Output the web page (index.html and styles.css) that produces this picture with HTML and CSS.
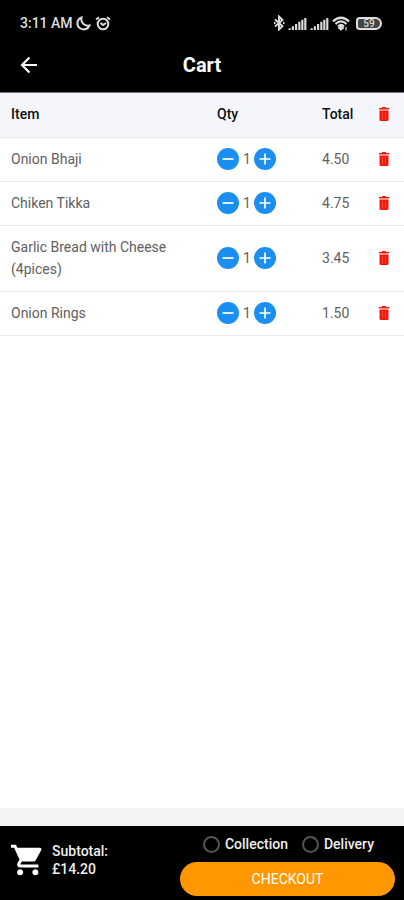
FILE: index.html
```html
<!DOCTYPE html>
<html lang="en">
<head>
    <meta charset="UTF-8">
    <meta name="viewport" content="width=device-width, initial-scale=1.0">
    <title>Cart</title>
    <link rel="stylesheet" href="styles.css">
</head>
<body>
    <svg class="sprite" aria-hidden="true">
        <symbol id="trash" viewBox="0 0 12 14">
            <path d="M4 0h4v1h3v1.500H1V1h3z"/>
            <path d="M1.500 3.500h9v9q0 1.500-1.500 1.500H3q-1.500 0-1.500-1.500z"/>
            <path d="M4.500 5v7.500M7.500 5v7.500" stroke="#ff5a50" stroke-width=".7"/>
        </symbol>
        <symbol id="minus" viewBox="0 0 22 22">
            <path d="M5.500 11h11" stroke="#fff" stroke-width="1.700"/>
        </symbol>
        <symbol id="plus" viewBox="0 0 22 22">
            <path d="M5.500 11h11M11 5.500v11" stroke="#fff" stroke-width="1.700"/>
        </symbol>
        <symbol id="signal" viewBox="0 0 20 14">
            <path d="M1.500 14v-2M5 14v-4M8.500 14V7.500M12 14V5M15.200 14V3M18.400 14V1" stroke="#ddd" stroke-width="2.300"/>
        </symbol>
    </svg>

    <header class="top">
        <div class="status">
            <div class="status-left">
                <span>3:11 AM</span>
                <svg width="15" height="15" viewBox="0 0 15 15" fill="none" stroke="#ddd" stroke-width="2">
                    <path d="M5.500 1.500C4.500 6 8 10.500 13.500 9.500C12 13 8 14.500 4.500 12.500C0 10 .5 3.500 5.500 1.500z"/>
                </svg>
                <svg class="alarm" width="16" height="15" viewBox="0 0 16 15" fill="none" stroke="#ddd" stroke-width="2">
                    <circle cx="8" cy="8" r="5.300"/>
                    <path d="M1 3.500L4 1.300M15 3.500L12 1.300M5.500 7L8 9l3-2"/>
                </svg>
            </div>
            <div class="status-right">
                <svg width="12" height="16" viewBox="0 0 12 16" fill="none" stroke="#ddd" stroke-width="1.900">
                    <path d="M2 4.500L9.500 11L6 14.500V1.500L9.500 5L2 11.500M1 8h1.500M10 8h1.500"/>
                </svg>
                <svg width="19" height="13"><use href="#signal"/></svg>
                <svg width="19" height="13"><use href="#signal"/></svg>
                <svg width="18" height="15" viewBox="0 0 18 15" fill="none" stroke="#ddd" stroke-width="2.200">
                    <path d="M1 5.500Q9-2 17 5.500M3.500 8Q9 2.800 14.500 8M6 10.500Q9 7.500 12 10.500"/>
                    <path d="M9 10l2.500 2L9 14l-2.500-2zM14 14.500V11" fill="#ddd" stroke-width="1.200"/>
                </svg>
                <span class="battery">59</span>
            </div>
        </div>
        <div class="title-bar">
            <button class="back" type="button" aria-label="Back">
                <svg width="18" height="18" viewBox="0 0 18 18" fill="none" stroke="#fff" stroke-width="2.200">
                    <path d="M17 9H2M9.500 1.500L2 9l7.500 7.500"/>
                </svg>
            </button>
            <h1>Cart</h1>
        </div>
    </header>

    <main>
        <table class="cart">
            <thead>
                <tr>
                    <th class="col-item">Item</th>
                    <th class="col-qty">Qty</th>
                    <th class="col-total">Total</th>
                    <th class="col-delete"><button class="delete" type="button" aria-label="Empty cart"><svg><use href="#trash"/></svg></button></th>
                </tr>
            </thead>
            <tbody>
                <tr>
                    <td>Onion Bhaji</td>
                    <td>
                        <div class="qty">
                            <button type="button" aria-label="Less"><svg><use href="#minus"/></svg></button>
                            <span>1</span>
                            <button type="button" aria-label="More"><svg><use href="#plus"/></svg></button>
                        </div>
                    </td>
                    <td>4.50</td>
                    <td><button class="delete" type="button" aria-label="Delete"><svg><use href="#trash"/></svg></button></td>
                </tr>
                <tr>
                    <td>Chiken Tikka</td>
                    <td>
                        <div class="qty">
                            <button type="button" aria-label="Less"><svg><use href="#minus"/></svg></button>
                            <span>1</span>
                            <button type="button" aria-label="More"><svg><use href="#plus"/></svg></button>
                        </div>
                    </td>
                    <td>4.75</td>
                    <td><button class="delete" type="button" aria-label="Delete"><svg><use href="#trash"/></svg></button></td>
                </tr>
                <tr>
                    <td>Garlic Bread with Cheese (4pices)</td>
                    <td>
                        <div class="qty">
                            <button type="button" aria-label="Less"><svg><use href="#minus"/></svg></button>
                            <span>1</span>
                            <button type="button" aria-label="More"><svg><use href="#plus"/></svg></button>
                        </div>
                    </td>
                    <td>3.45</td>
                    <td><button class="delete" type="button" aria-label="Delete"><svg><use href="#trash"/></svg></button></td>
                </tr>
                <tr>
                    <td>Onion Rings</td>
                    <td>
                        <div class="qty">
                            <button type="button" aria-label="Less"><svg><use href="#minus"/></svg></button>
                            <span>1</span>
                            <button type="button" aria-label="More"><svg><use href="#plus"/></svg></button>
                        </div>
                    </td>
                    <td>1.50</td>
                    <td><button class="delete" type="button" aria-label="Delete"><svg><use href="#trash"/></svg></button></td>
                </tr>
            </tbody>
        </table>
    </main>

    <footer class="bottom">
        <div class="summary">
            <svg width="32" height="32" viewBox="1 2 21 20" fill="#fff">
                <path d="M7 18c-1.100 0-1.990.9-1.990 2S5.900 22 7 22s2-.9 2-2-.9-2-2-2zM1 2v2h2l3.600 7.590-1.350 2.450c-.16.280-.25.610-.25.960 0 1.100.9 2 2 2h12v-2H7.420c-.14 0-.25-.11-.25-.25l.03-.12.900-1.630h7.450c.75 0 1.410-.41 1.750-1.030l3.580-6.490A1 1 0 0 0 20 4H5.210l-.94-2H1zm16 16c-1.100 0-1.990.9-1.990 2s.89 2 1.990 2 2-.9 2-2-.9-2-2-2z"/>
            </svg>
            <p>Subtotal:<br>£14.20</p>
        </div>
        <form class="order">
            <div class="options">
                <label><input type="radio" name="method" value="collection">Collection</label>
                <label><input type="radio" name="method" value="delivery">Delivery</label>
            </div>
            <button class="checkout" type="button">CHECKOUT</button>
        </form>
    </footer>
</body>
</html>
```

FILE: styles.css
```css
* {
    box-sizing: border-box;
}
body {
    font-family: Roboto, sans-serif;
    font-size: 14px;
    background-color: #fff;
    margin: 0;
    min-height: 100vh;
    display: flex;
    flex-direction: column;
}
button {
    font-family: inherit;
    border: none;
    padding: 0;
    background: none;
    cursor: pointer;
}
svg {
    display: block;
    flex: none;
}
.sprite {
    position: absolute;
    width: 0;
    height: 0;
}
.top {
    background-color: #000;
    color: #fff;
    padding-top: 14px;
    border-bottom: 1px solid #777;
}
.status {
    display: flex;
    justify-content: space-between;
    align-items: center;
    height: 18px;
    padding: 0 22px 0 20px;
    color: #ddd;
    font-weight: 500;
}
.status-left, .status-right {
    display: flex;
    align-items: center;
    gap: 3px;
}
.alarm {
    margin-left: 1px;
}
.battery {
    width: 26px;
    height: 13px;
    margin-left: 3px;
    border: 2px solid #ddd;
    border-radius: 4px 7px 7px 4px;
    background-color: #444;
    font-size: 10px;
    line-height: 9px;
    text-align: center;
}
.title-bar {
    display: grid;
    grid-template-columns: 40px 1fr 40px;
    align-items: center;
    height: 60px;
    padding-top: 6px;
}
.back {
    padding-left: 20px;
}
h1 {
    margin: 0;
    font-size: 20px;
    line-height: 24px;
    font-weight: 700;
    text-align: center;
}
main {
    flex: 1;
}
.cart {
    width: 100%;
    border-collapse: separate;
    border-spacing: 0;
    table-layout: fixed;
    line-height: 22px;
    color: #606060;
}
.cart th, .cart td {
    padding: 10px 10px 11px 11px;
    border-bottom: 1px solid #e8e8e8;
    text-align: left;
    font-weight: 400;
    vertical-align: middle;
}
.cart th {
    padding-bottom: 12px;
    background-color: #f5f6fb;
    color: #111;
    font-weight: 500;
}
.col-item {
    width: 51%;
}
.col-qty {
    width: 26%;
}
.col-delete {
    width: 36px;
}
.cart td:last-child, .cart th:last-child {
    padding-left: 0;
}
.delete {
    display: block;
    margin-left: auto;
    margin-right: 4px;
    fill: #f3180c;
}
.delete svg {
    width: 12px;
    height: 14px;
}
.qty {
    display: flex;
    align-items: center;
    gap: 4px;
}
.qty button {
    width: 22px;
    height: 22px;
    border-radius: 50%;
    background-color: #1b8ff0;
}
.qty svg {
    width: 22px;
    height: 22px;
}
.qty span {
    width: 7px;
    text-align: center;
}
.bottom {
    display: flex;
    justify-content: space-between;
    border-top: 18px solid #f3f3f3;
    background-color: #000;
    color: #eee;
    padding: 8px 9px 4px 11px;
    font-weight: 500;
}
.summary {
    display: flex;
    align-items: center;
    gap: 9px;
    padding-bottom: 11px;
}
.summary p {
    margin: 0;
    line-height: 18px;
}
.order {
    width: 56%;
}
.options {
    display: flex;
    justify-content: flex-end;
    gap: 14px;
    height: 20px;
    margin-bottom: 8px;
    padding-right: 21px;
}
.options label {
    display: flex;
    align-items: center;
    gap: 5px;
}
.options input {
    appearance: none;
    width: 17px;
    height: 17px;
    margin: 0;
    border: 2px solid #555;
    border-radius: 50%;
}
.options input:checked {
    border: 5px solid #ff9800;
}
.checkout {
    display: block;
    width: 100%;
    height: 34px;
    border-radius: 17px;
    background-color: #ff9800;
    color: #fff;
    font-size: 14px;
}
```
